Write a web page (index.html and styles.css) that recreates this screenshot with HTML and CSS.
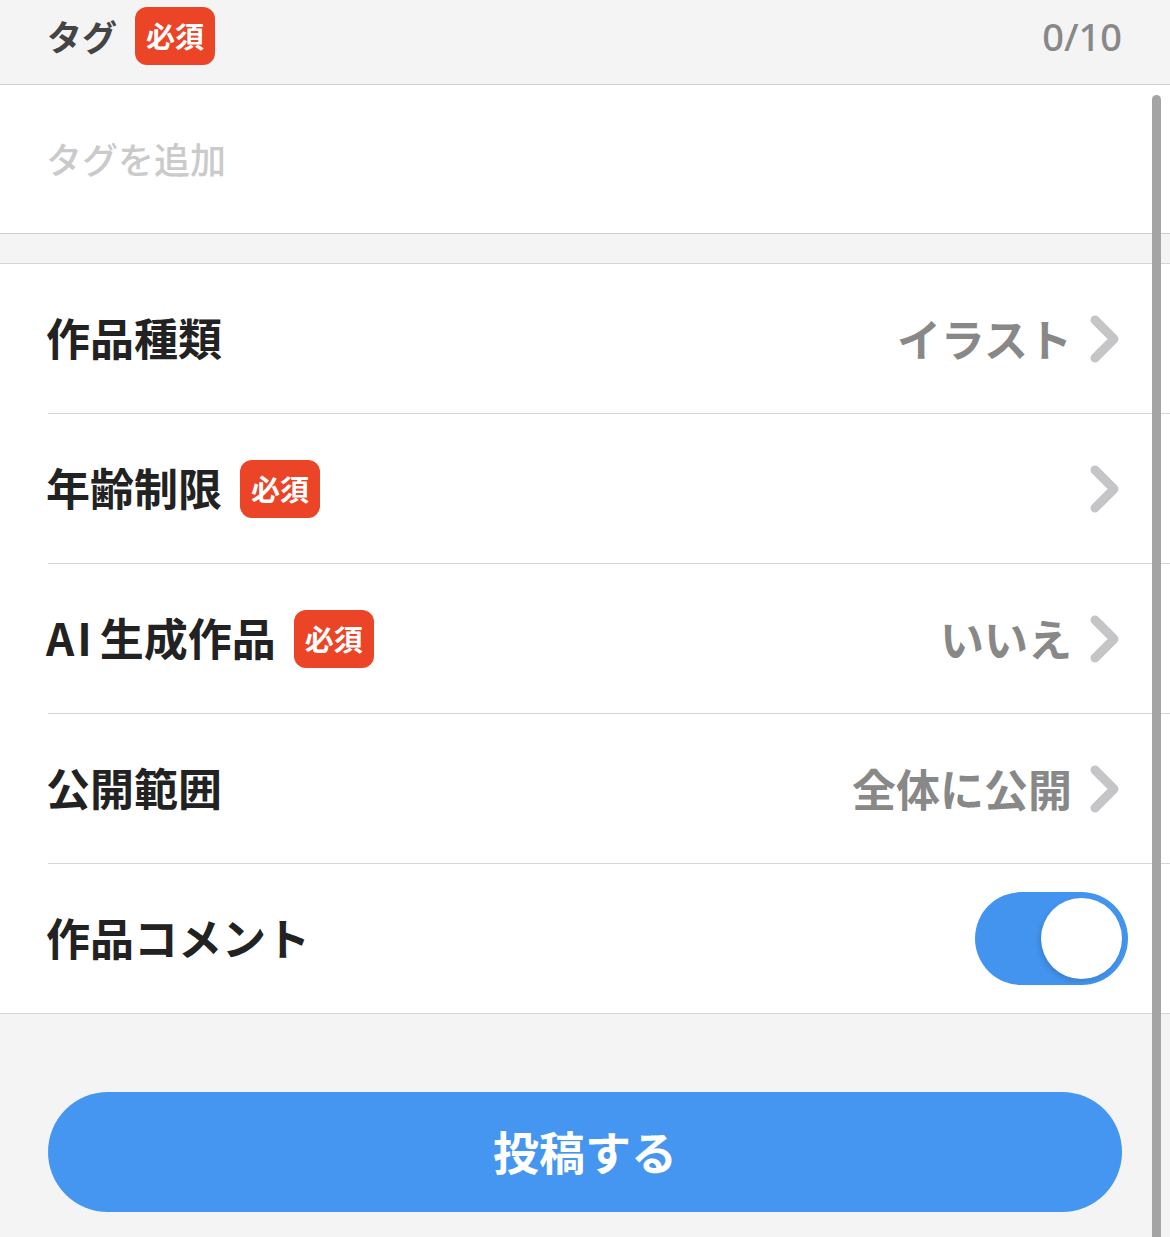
FILE: index.html
```
<!DOCTYPE html>
<html lang="ja">
<head>
<meta charset="utf-8">
<link rel="stylesheet" href="styles.css">
</head>
<body>
<div class="page">
  <div class="tag-head">
    <div class="head-left">
      <span class="tag-label">タグ</span>
      <span class="badge">必須</span>
    </div>
    <span class="count">0/10</span>
  </div>
  <div class="tag-input">
    <span class="placeholder">タグを追加</span>
  </div>
  <div class="gap"></div>
  <div class="list">
    <div class="row">
      <div class="row-left"><span class="label">作品種類</span></div>
      <div class="row-right"><span class="value">イラスト</span><svg class="chev" width="30" height="48" viewBox="0 0 30 48"><polyline points="5,5 24,24 5,43" fill="none" stroke="#c5c5c7" stroke-width="9" stroke-linecap="round" stroke-linejoin="round"/></svg></div>
    </div>
    <div class="row">
      <div class="row-left"><span class="label">年齢制限</span><span class="badge">必須</span></div>
      <div class="row-right"><svg class="chev" width="30" height="48" viewBox="0 0 30 48"><polyline points="5,5 24,24 5,43" fill="none" stroke="#c5c5c7" stroke-width="9" stroke-linecap="round" stroke-linejoin="round"/></svg></div>
    </div>
    <div class="row">
      <div class="row-left"><span class="label"><span class="latin">AI</span>生成作品</span><span class="badge">必須</span></div>
      <div class="row-right"><span class="value">いいえ</span><svg class="chev" width="30" height="48" viewBox="0 0 30 48"><polyline points="5,5 24,24 5,43" fill="none" stroke="#c5c5c7" stroke-width="9" stroke-linecap="round" stroke-linejoin="round"/></svg></div>
    </div>
    <div class="row">
      <div class="row-left"><span class="label">公開範囲</span></div>
      <div class="row-right"><span class="value">全体に公開</span><svg class="chev" width="30" height="48" viewBox="0 0 30 48"><polyline points="5,5 24,24 5,43" fill="none" stroke="#c5c5c7" stroke-width="9" stroke-linecap="round" stroke-linejoin="round"/></svg></div>
    </div>
    <div class="row row-last">
      <div class="row-left"><span class="label">作品コメント</span></div>
      <div class="row-right"><div class="toggle"><div class="knob"></div></div></div>
    </div>
  </div>
  <div class="footer">
    <button class="submit">投稿する</button>
  </div>
  <div class="scrollbar"></div>
</div>
</body>
</html>
```

FILE: styles.css
```
* { box-sizing: border-box; }
html, body {
  margin: 0;
  padding: 0;
  background: #f4f4f4;
}
body {
  font-family: "Noto Sans CJK JP", "Noto Sans", sans-serif;
  width: 1170px;
  height: 1237px;
  overflow: hidden;
}
.page {
  position: relative;
  width: 1170px;
  height: 1237px;
}
.tag-head {
  height: 85px;
  padding: 0 48px 13px 48px;
  display: flex;
  align-items: center;
  justify-content: space-between;
  border-bottom: 1px solid #cdcdcd;
}
.head-left {
  display: flex;
  align-items: center;
  gap: 18px;
}
.tag-label {
  font-size: 35px;
  font-weight: 700;
  color: #444;
  line-height: 1;
  margin-left: -1px;
}
.badge {
  display: inline-flex;
  align-items: center;
  justify-content: center;
  width: 80px;
  height: 58px;
  border-radius: 12px;
  background: #eb4426;
  color: #fff;
  font-size: 29px;
  font-weight: 700;
  line-height: 1;
}
.count {
  font-family: "Noto Sans", sans-serif;
  font-size: 38px;
  font-weight: 500;
  color: #888;
  line-height: 1;
}
.tag-input {
  height: 149px;
  background: #fff;
  border-bottom: 1px solid #cdcdcd;
  display: flex;
  align-items: center;
  padding: 0 48px 0 46px;
}
.placeholder {
  font-size: 36px;
  font-weight: 500;
  color: #cacaca;
  line-height: 1;
  margin-top: -2px;
}
.gap {
  height: 29px;
}
.list {
  background: #fff;
  border-top: 1px solid #d6d6d6;
  border-bottom: 1px solid #d6d6d6;
  padding-left: 48px;
}
.row {
  height: 150px;
  display: flex;
  align-items: center;
  justify-content: space-between;
  padding-right: 50px;
  border-bottom: 1px solid #d6d6d6;
}
.row-last {
  height: 149px;
  border-bottom: none;
}
.row-left {
  display: flex;
  align-items: center;
  gap: 18px;
}
.label {
  font-size: 44px;
  font-weight: 700;
  color: #222;
  line-height: 1;
  margin-left: -2px;
  margin-top: -3px;
}
.latin {
  letter-spacing: 3px;
  margin-right: 5px;
}
.row-right {
  display: flex;
  align-items: center;
  gap: 18px;
}
.value {
  font-size: 44px;
  font-weight: 700;
  color: #888;
  line-height: 1;
  margin-top: -2px;
}
.chev {
  display: block;
  margin-right: 0;
}
.toggle {
  width: 153px;
  height: 93px;
  border-radius: 47px;
  background: #4394ee;
  padding: 6px;
  display: flex;
  justify-content: flex-end;
  margin-right: -8px;
}
.knob {
  width: 81px;
  height: 81px;
  border-radius: 50%;
  background: #fff;
  box-shadow: -2px 3px 5px rgba(0, 0, 0, 0.12);
}
.footer {
  padding: 78px 48px 0 48px;
}
.submit {
  display: flex;
  align-items: center;
  justify-content: center;
  width: 100%;
  height: 120px;
  border: none;
  border-radius: 60px;
  background: #4596f0;
  color: #fff;
  font-family: "Noto Sans CJK JP", sans-serif;
  font-size: 46px;
  font-weight: 700;
  line-height: 1;
  padding: 0 0 4px 0;
}
.scrollbar {
  position: absolute;
  left: 1152px;
  top: 95px;
  width: 9px;
  height: 1160px;
  border-radius: 5px;
  background: #a4a4a4;
}
```
